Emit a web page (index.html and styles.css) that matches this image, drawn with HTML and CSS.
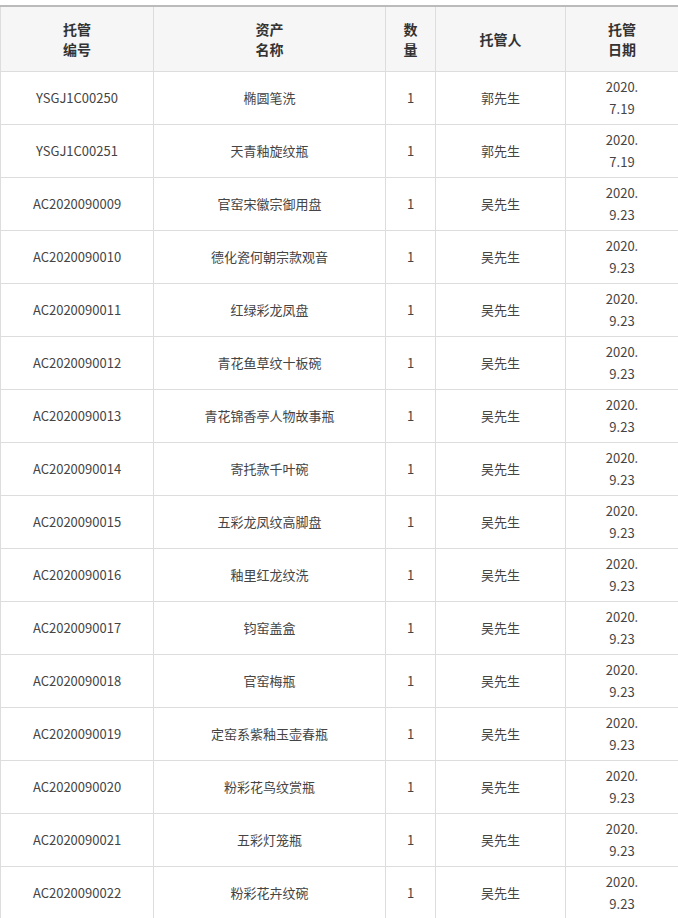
FILE: index.html
```html
<!DOCTYPE html>
<html lang="zh">
<head>
<meta charset="utf-8">
<link rel="stylesheet" href="styles.css">
</head>
<body>
<div class="wrap">
<table class="grid">
<colgroup>
<col class="c1"><col class="c2"><col class="c3"><col class="c4"><col class="c5">
</colgroup>
<thead>
<tr><th>托管<br>编号</th><th>资产<br>名称</th><th>数<br>量</th><th>托管人</th><th>托管<br>日期</th></tr>
</thead>
<tbody>
<tr><td>YSGJ1C00250</td><td>椭圆笔洗</td><td>1</td><td>郭先生</td><td>2020.<br>7.19</td></tr>
<tr><td>YSGJ1C00251</td><td>天青釉旋纹瓶</td><td>1</td><td>郭先生</td><td>2020.<br>7.19</td></tr>
<tr><td>AC2020090009</td><td>官窑宋徽宗御用盘</td><td>1</td><td>吴先生</td><td>2020.<br>9.23</td></tr>
<tr><td>AC2020090010</td><td>德化瓷何朝宗款观音</td><td>1</td><td>吴先生</td><td>2020.<br>9.23</td></tr>
<tr><td>AC2020090011</td><td>红绿彩龙凤盘</td><td>1</td><td>吴先生</td><td>2020.<br>9.23</td></tr>
<tr><td>AC2020090012</td><td>青花鱼草纹十板碗</td><td>1</td><td>吴先生</td><td>2020.<br>9.23</td></tr>
<tr><td>AC2020090013</td><td>青花锦香亭人物故事瓶</td><td>1</td><td>吴先生</td><td>2020.<br>9.23</td></tr>
<tr><td>AC2020090014</td><td>寄托款千叶碗</td><td>1</td><td>吴先生</td><td>2020.<br>9.23</td></tr>
<tr><td>AC2020090015</td><td>五彩龙凤纹高脚盘</td><td>1</td><td>吴先生</td><td>2020.<br>9.23</td></tr>
<tr><td>AC2020090016</td><td>釉里红龙纹洗</td><td>1</td><td>吴先生</td><td>2020.<br>9.23</td></tr>
<tr><td>AC2020090017</td><td>钧窑盖盒</td><td>1</td><td>吴先生</td><td>2020.<br>9.23</td></tr>
<tr><td>AC2020090018</td><td>官窑梅瓶</td><td>1</td><td>吴先生</td><td>2020.<br>9.23</td></tr>
<tr><td>AC2020090019</td><td>定窑系紫釉玉壶春瓶</td><td>1</td><td>吴先生</td><td>2020.<br>9.23</td></tr>
<tr><td>AC2020090020</td><td>粉彩花鸟纹赏瓶</td><td>1</td><td>吴先生</td><td>2020.<br>9.23</td></tr>
<tr><td>AC2020090021</td><td>五彩灯笼瓶</td><td>1</td><td>吴先生</td><td>2020.<br>9.23</td></tr>
<tr><td>AC2020090022</td><td>粉彩花卉纹碗</td><td>1</td><td>吴先生</td><td>2020.<br>9.23</td></tr>
</tbody>
</table>
</div>
</body>
</html>
```
FILE: styles.css
```css
html, body {
  margin: 0;
  padding: 0;
  background: #fff;
}
body {
  font-family: "Noto Sans CJK SC", "Noto Sans", sans-serif;
  color: #333;
}
.wrap {
  margin-top: 5px;
  border-top: 2px solid #bbb;
  width: 678px;
}
.grid {
  width: 678px;
  border-collapse: collapse;
  table-layout: fixed;
}
.c1 { width: 153px; }
.c2 { width: 232px; }
.c3 { width: 50px; }
.c4 { width: 130px; }
.c5 { width: 113px; }
.grid th,
.grid td {
  border: 1px solid #ddd;
  text-align: center;
  vertical-align: middle;
  padding: 0;
}
.grid thead th {
  border-top: none;
  background: #f6f6f6;
  font-weight: bold;
  font-size: 14px;
  line-height: 20px;
  height: 64px;
  color: #333;
}
.grid td {
  font-size: 13px;
  line-height: 22px;
  height: 52px;
  color: #444;
}
```
